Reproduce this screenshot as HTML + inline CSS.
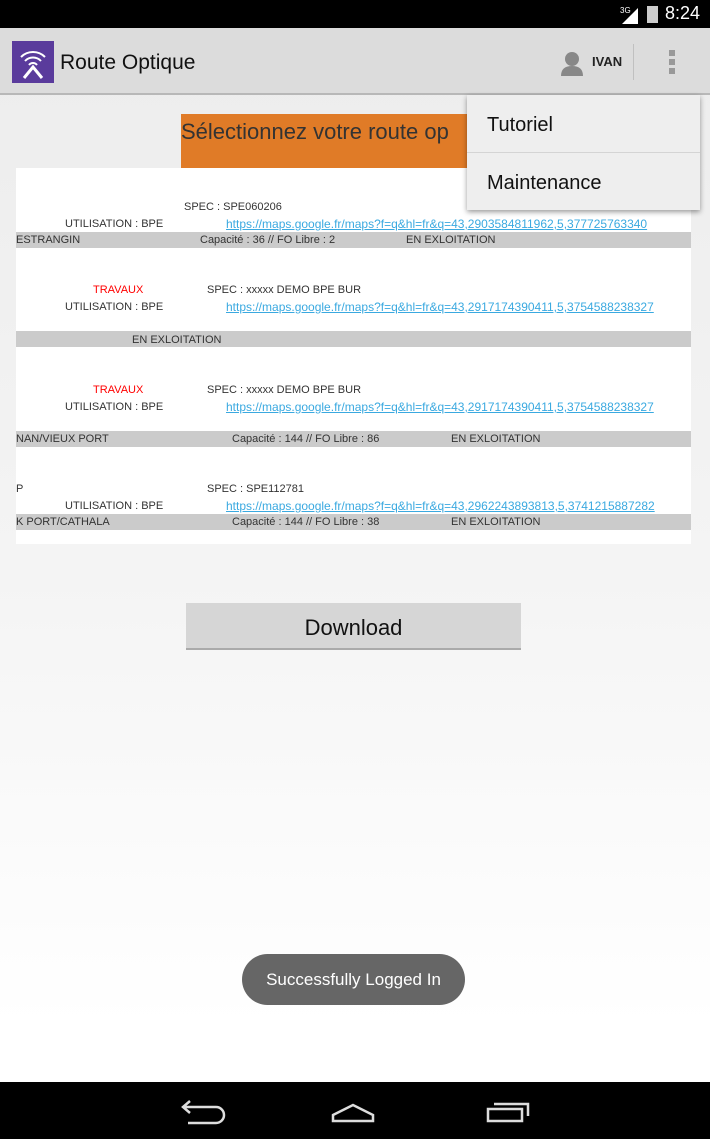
<!DOCTYPE html>
<html><head><meta charset="utf-8"><style>
*{margin:0;padding:0;box-sizing:border-box}
body{width:710px;height:1139px;position:relative;overflow:hidden;font-family:"Liberation Sans",sans-serif;background:linear-gradient(#ececec,#f4f4f4 50%,#fff 90%)}
.a{position:absolute;white-space:nowrap}
.s{font-size:11px;color:#333;line-height:14px}
.l{color:#3aa9e0;text-decoration:underline;font-size:12px}
.r{color:#f00}
.bar{position:absolute;left:16px;width:675px;height:16px;background:#cbcbcb}
</style></head><body>
<div class="a" style="left:0;top:0;width:710px;height:28px;background:#000"></div>
<svg class="a" style="left:620px;top:4px" width="20" height="20"><polygon points="2,20 18,4 18,20" fill="#fff"/><text x="0" y="9" font-size="8" fill="#fff" font-family="Liberation Sans">3G</text></svg>
<div class="a" style="left:647px;top:6px;width:11px;height:17px;background:#ccc"></div>
<div class="a" style="left:665px;top:3px;color:#fff;font-size:18px">8:24</div>
<div class="a" style="left:0;top:28px;width:710px;height:67px;background:#dcdcdc;border-bottom:2px solid #b8b8b8"></div>
<div class="a" style="left:12px;top:41px;width:42px;height:42px;background:#5a3b9c"></div>
<svg class="a" style="left:12px;top:41px" width="42" height="42" fill="none" stroke="#fff" stroke-width="2"><path d="M9 16a17 17 0 0 1 24 0M13 20a11 11 0 0 1 16 0M17 24a5 5 0 0 1 8 0"/><path d="M12 37l9-11 9 11" stroke-width="3"/></svg>
<div class="a" style="left:60px;top:51px;font-size:21px;color:#111">Route Optique</div>
<svg class="a" style="left:560px;top:50px" width="24" height="26" fill="#888"><circle cx="12" cy="9" r="7"/><path d="M1 26q0-10 11-10t11 10z"/></svg>
<div class="a" style="left:592px;top:54px;font-size:13px;font-weight:bold;color:#222">IVAN</div>
<div class="a" style="left:633px;top:44px;width:1px;height:36px;background:#c0c0c0"></div>
<div class="a" style="left:669px;top:50px;width:6px;height:6px;background:#999;box-shadow:0 9px #999,0 18px #999"></div>
<div class="a" style="left:181px;top:114px;width:310px;height:54px;background:#e07b27"></div>
<div class="a" style="left:181px;top:119px;font-size:22px;color:#333">Sélectionnez votre route op</div>
<div class="a" style="left:16px;top:168px;width:675px;height:376px;background:#fff"></div>
<div class="bar" style="top:232px"></div><div class="bar" style="top:331px"></div><div class="bar" style="top:431px"></div><div class="bar" style="top:514px"></div>
<div class="a s" style="left:184px;top:200px">SPEC : SPE060206</div>
<div class="a s" style="left:65px;top:217px">UTILISATION : BPE</div>
<div class="a s l" style="left:226px;top:217px">https://maps.google.fr/maps?f=q&amp;hl=fr&amp;q=43,2903584811962,5,377725763340</div>
<div class="a s" style="left:16px;top:233px">ESTRANGIN</div>
<div class="a s" style="left:200px;top:233px">Capacité : 36 // FO Libre : 2</div>
<div class="a s" style="left:406px;top:233px">EN EXLOITATION</div>
<div class="a s r" style="left:93px;top:283px">TRAVAUX</div>
<div class="a s" style="left:207px;top:283px">SPEC : xxxxx DEMO BPE BUR</div>
<div class="a s" style="left:65px;top:300px">UTILISATION : BPE</div>
<div class="a s l" style="left:226px;top:300px">https://maps.google.fr/maps?f=q&amp;hl=fr&amp;q=43,2917174390411,5,3754588238327</div>
<div class="a s" style="left:132px;top:333px">EN EXLOITATION</div>
<div class="a s r" style="left:93px;top:383px">TRAVAUX</div>
<div class="a s" style="left:207px;top:383px">SPEC : xxxxx DEMO BPE BUR</div>
<div class="a s" style="left:65px;top:400px">UTILISATION : BPE</div>
<div class="a s l" style="left:226px;top:400px">https://maps.google.fr/maps?f=q&amp;hl=fr&amp;q=43,2917174390411,5,3754588238327</div>
<div class="a s" style="left:16px;top:432px">NAN/VIEUX PORT</div>
<div class="a s" style="left:232px;top:432px">Capacité : 144 // FO Libre : 86</div>
<div class="a s" style="left:451px;top:432px">EN EXLOITATION</div>
<div class="a s" style="left:16px;top:482px">P</div>
<div class="a s" style="left:207px;top:482px">SPEC : SPE112781</div>
<div class="a s" style="left:65px;top:499px">UTILISATION : BPE</div>
<div class="a s l" style="left:226px;top:499px">https://maps.google.fr/maps?f=q&amp;hl=fr&amp;q=43,2962243893813,5,3741215887282</div>
<div class="a s" style="left:16px;top:515px">K PORT/CATHALA</div>
<div class="a s" style="left:232px;top:515px">Capacité : 144 // FO Libre : 38</div>
<div class="a s" style="left:451px;top:515px">EN EXLOITATION</div>
<div class="a" style="left:186px;top:603px;width:335px;height:47px;background:#d6d6d6;border-bottom:2px solid #aaa;text-align:center;line-height:49px;font-size:22px;color:#111">Download</div>
<div class="a" style="left:467px;top:95px;width:233px;height:115px;background:#eee;box-shadow:0 2px 5px rgba(0,0,0,.4)"></div>
<div class="a" style="left:467px;top:152px;width:233px;height:1px;background:#d4d4d4"></div>
<div class="a" style="left:487px;top:114px;font-size:20px;color:#111">Tutoriel</div>
<div class="a" style="left:487px;top:172px;font-size:20px;color:#111">Maintenance</div>
<div class="a" style="left:242px;top:954px;width:223px;height:51px;background:#666;border-radius:26px;color:#fff;text-align:center;line-height:51px;font-size:17px">Successfully Logged In</div>
<div class="a" style="left:0;top:1082px;width:710px;height:57px;background:#000"></div>
<svg class="a" style="left:170px;top:1095px" width="370" height="32" fill="none" stroke="#ddd" stroke-width="2.5"><path d="M14 12h32a8 8 0 0 1 0 16H18M20 6l-7 6 7 6"/><path d="M163 20l20-10 20 10v6h-40z"/><path d="M318 14h34v12h-34zM324 9h34v12"/></svg>
</body></html>
